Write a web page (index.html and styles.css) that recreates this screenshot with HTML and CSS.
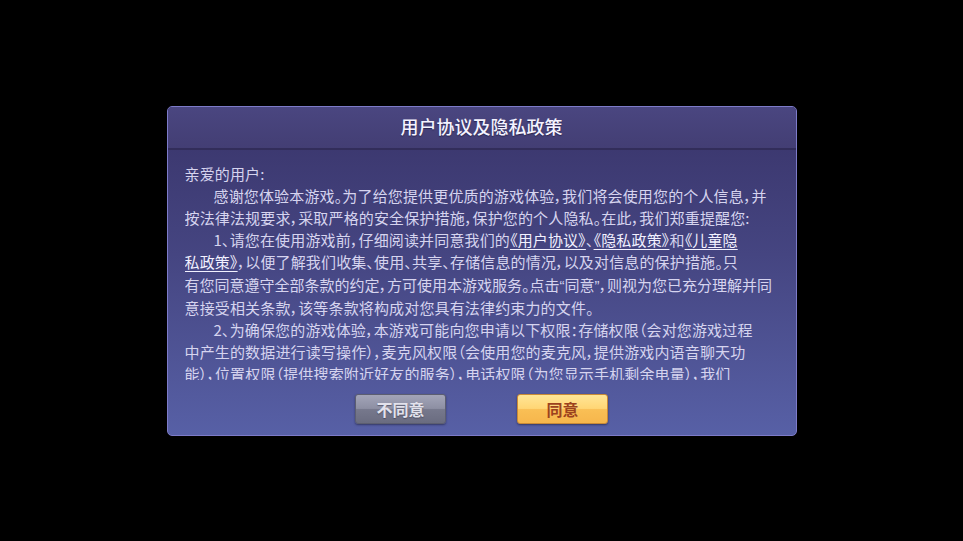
FILE: index.html
```html
<!DOCTYPE html>
<html lang="zh-CN">
<head>
<meta charset="utf-8">
<title>用户协议及隐私政策</title>
<link rel="stylesheet" href="styles.css">
</head>
<body>
<div class="stage">
  <div class="dialog">
    <div class="title">用户协议及隐私政策</div>
    <div class="body">
      <div class="scroll">
        <p class="ln">亲爱的用户:</p>
        <p class="ln indent">感谢您体验本游戏。为了给您提供更优质的游戏体验，我们将会使用您的个人信息，并</p>
        <p class="ln">按法律法规要求，采取严格的安全保护措施，保护您的个人隐私。在此，我们郑重提醒您:</p>
        <p class="ln indent">1、请您在使用游戏前，仔细阅读并同意我们的<span class="link">《用户协议》</span>、<span class="link">《隐私政策》</span>和<span class="link">《儿童隐</span></p>
        <p class="ln"><span class="link">私政策》</span>，以便了解我们收集、使用、共享、存储信息的情况，以及对信息的保护措施。只</p>
        <p class="ln tight">有您同意遵守全部条款的约定，方可使用本游戏服务。点击<span class="q">“</span>同意<span class="q">”</span>，则视为您已充分理解并同</p>
        <p class="ln">意接受相关条款，该等条款将构成对您具有法律约束力的文件。</p>
        <p class="ln indent">2、为确保您的游戏体验，本游戏可能向您申请以下权限：存储权限（会对您游戏过程</p>
        <p class="ln">中产生的数据进行读写操作），麦克风权限（会使用您的麦克风，提供游戏内语音聊天功</p>
        <p class="ln">能），位置权限（提供搜索附近好友的服务），电话权限（为您显示手机剩余电量），我们</p>
        <p class="ln">将严格保护您的个人信息安全。</p>
      </div>
      <div class="actions">
        <button class="btn btn-gray">不同意</button>
        <button class="btn btn-gold">同意</button>
      </div>
    </div>
  </div>
</div>
</body>
</html>
```
FILE: styles.css
```css
html, body {
  margin: 0;
  padding: 0;
  background: #000;
}
body {
  width: 963px;
  height: 541px;
  overflow: hidden;
  font-family: "Noto Sans CJK SC", "Noto Sans", sans-serif;
}
.stage {
  width: 963px;
  height: 541px;
  display: flex;
  align-items: center;
  justify-content: center;
}
.dialog {
  width: 628px;
  height: 328px;
  border: 1px solid #7d7bc9;
  border-radius: 5px;
  overflow: hidden;
  display: flex;
  flex-direction: column;
  background: linear-gradient(to bottom, #39346a 0%, #454581 45%, #5760a6 100%);
}
.title {
  flex: none;
  height: 43px;
  display: flex;
  align-items: center;
  justify-content: center;
  padding-bottom: 3px;
  box-sizing: border-box;
  color: #f4f3ff;
  font-size: 18px;
  font-weight: 500;
  background: linear-gradient(to bottom, #4a4680 0%, #433e74 100%);
  border-bottom: 2px solid #322d5a;
  text-shadow: 0 1px 1px rgba(20, 15, 50, 0.6);
}
.body {
  flex: 1;
  display: flex;
  flex-direction: column;
  padding: 0 17px 12px 17px;
}
.scroll {
  flex: none;
  height: 230px;
  padding-top: 13px;
  box-sizing: border-box;
  overflow: hidden;
}
.ln {
  margin: 0;
  font-size: 15px;
  line-height: 22.2px;
  color: #d6d4ef;
  white-space: nowrap;
  letter-spacing: 0.15px;
  font-feature-settings: "palt";
}
.ln.tight {
  letter-spacing: 0;
}
.indent {
  padding-left: 29px;
}
.q {
  font-family: "Liberation Sans", sans-serif;
}
.link {
  color: #f2f1ff;
  text-decoration: underline;
  text-underline-offset: 3px;
}
.actions {
  margin-top: 14px;
  display: flex;
  justify-content: center;
  gap: 71px;
}
.btn {
  width: 91px;
  height: 30px;
  border-radius: 3px;
  font-family: "Noto Sans CJK SC", sans-serif;
  font-size: 16px;
  font-weight: bold;
  padding: 0;
  cursor: pointer;
}
.btn-gray {
  color: #e2e2ec;
  border: 1px solid #5c5e70;
  background: linear-gradient(to bottom, #a3a5b8 0%, #8d8fa3 48%, #76788c 52%, #6a6c80 100%);
  box-shadow: 0 1px 2px rgba(20, 20, 40, 0.5);
  text-shadow: 0 1px 1px rgba(40, 40, 60, 0.5);
}
.btn-gold {
  color: #9c421e;
  border: 1px solid #c98a36;
  background: linear-gradient(to bottom, #ffe596 0%, #ffd675 48%, #f9bf55 52%, #f6b64c 100%);
  box-shadow: 0 1px 2px rgba(20, 20, 40, 0.5);
}
```
